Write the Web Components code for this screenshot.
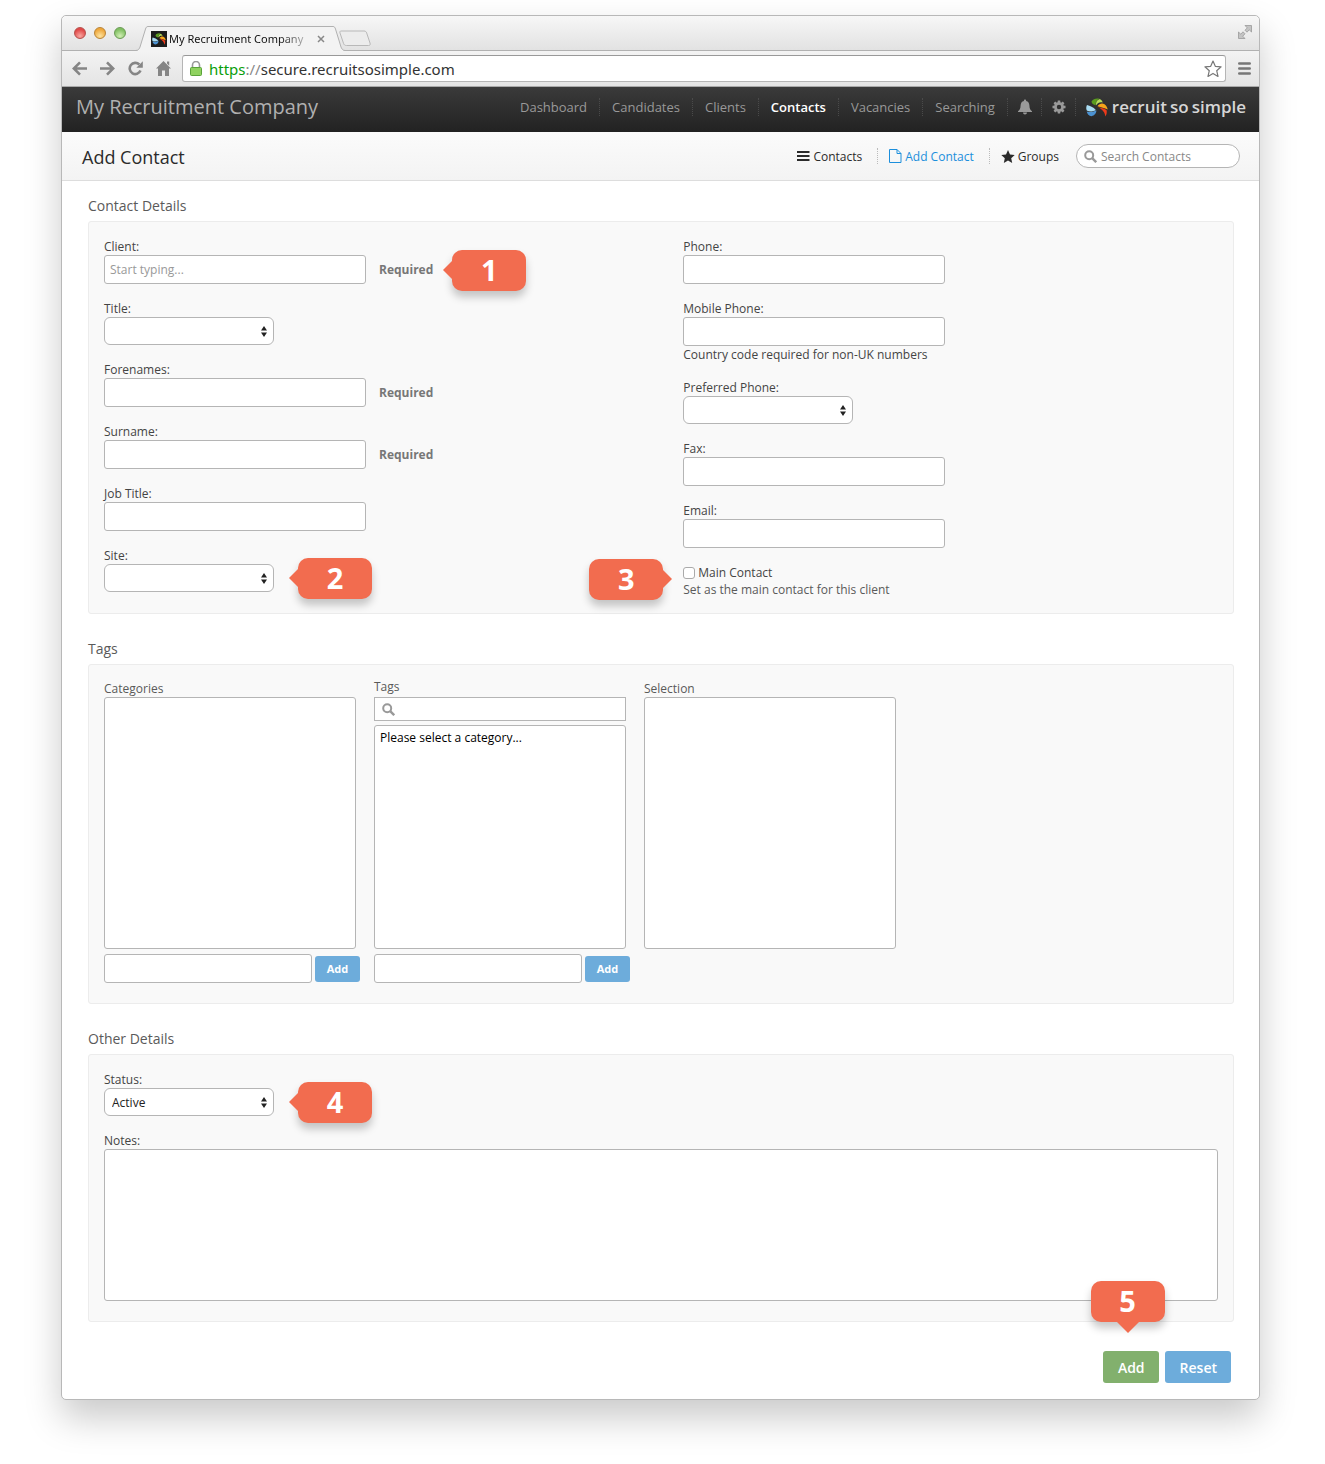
<!DOCTYPE html>
<html lang="en">
<head>
<meta charset="utf-8">
<title>Add Contact</title>
<style>
  body {
    margin: 0;
    padding: 15px 65px 64px 61px;
    background: #fff;
    color: #444;
    font: 12px/17px "Open Sans", "Noto Sans", sans-serif;
  }
</style>
</head>
<body>
<browser-window tab-title="My Recruitment Company" host="secure.recruitsosimple.com">
  <app-header brand="My Recruitment Company">
    <nav-link>Dashboard</nav-link>
    <nav-link>Candidates</nav-link>
    <nav-link>Clients</nav-link>
    <nav-link current>Contacts</nav-link>
    <nav-link>Vacancies</nav-link>
    <nav-link>Searching</nav-link>
    <nav-link label="Notifications"><app-icon name="bell"></app-icon></nav-link>
    <nav-link label="Settings"><app-icon name="gear"></app-icon></nav-link>
  </app-header>
  <page-bar heading="Add Contact">
    <page-link icon="list">Contacts</page-link>
    <page-link icon="file" current>Add Contact</page-link>
    <page-link icon="star">Groups</page-link>
  </page-bar>
  <contact-form>
    <form-section heading="Contact Details">
      <two-columns>
        <form-field slot="left" label="Client:" placeholder="Start typing..." required><call-out slot="callout" point="left">1</call-out></form-field>
        <form-field slot="left" label="Title:" kind="select"></form-field>
        <form-field slot="left" label="Forenames:" required></form-field>
        <form-field slot="left" label="Surname:" required></form-field>
        <form-field slot="left" label="Job Title:"></form-field>
        <form-field slot="left" label="Site:" kind="select"><call-out slot="callout" point="left">2</call-out></form-field>
        <form-field slot="right" label="Phone:"></form-field>
        <form-field slot="right" label="Mobile Phone:" hint="Country code required for non-UK numbers"></form-field>
        <form-field slot="right" label="Preferred Phone:" kind="select"></form-field>
        <form-field slot="right" label="Fax:"></form-field>
        <form-field slot="right" label="Email:"></form-field>
        <check-field slot="right" label="Main Contact" hint="Set as the main contact for this client"><call-out slot="callout" point="right">3</call-out></check-field>
      </two-columns>
    </form-section>
    <form-section heading="Tags" roomy>
      <tag-picker>
        <tag-column label="Categories" addable></tag-column>
        <tag-column label="Tags" searchable addable>Please select a category...</tag-column>
        <tag-column label="Selection"></tag-column>
      </tag-picker>
    </form-section>
    <form-section heading="Other Details" roomy>
      <field-stack>
        <form-field label="Status:" kind="select" value="Active"><call-out slot="callout" point="left">4</call-out></form-field>
        <form-field label="Notes:" kind="textarea"></form-field>
      </field-stack>
    </form-section>
    <form-actions slot="actions"><call-out slot="callout" point="down">5</call-out></form-actions>
  </contact-form>
</browser-window>

<script>
const define = (name, render) => customElements.define(name, class extends HTMLElement {
  connectedCallback() {
    if (this.shadowRoot) return;
    const root = this.attachShadow({ mode: 'open' });
    root.innerHTML = '<style>*{box-sizing:border-box}input,select,textarea,button{font:inherit;margin:0}svg{display:block}</style>' + render(this);
  }
});
const attr = (el, name) => el.getAttribute(name) || '';

const icons = {
  bell: '<svg width="14" height="16" viewBox="0 0 14 16" fill="#999"><path d="M7 0.5c.7 0 1.1.5 1.1 1.1v.5C10.300 2.600 11.300 4.400 11.400 6.500c.1 3 .8 4.700 2.600 5.800v.7H0v-.7c1.800-1.100 2.500-2.800 2.600-5.800C2.700 4.400 3.700 2.600 5.900 2.100v-.5C5.900 1 6.300.5 7 .5zM5 13.500h4c0 1.200-.9 2-2 2s-2-.8-2-2z"/></svg>',
  gear: '<svg width="14" height="14" viewBox="0 0 14 14"><g fill="#999"><path d="M5.800.5h2.400l.4 3H5.400z"/><path d="M5.800.5h2.400l.4 3H5.400z" transform="rotate(45 7 7)"/><path d="M5.800.5h2.400l.4 3H5.400z" transform="rotate(90 7 7)"/><path d="M5.800.5h2.400l.4 3H5.400z" transform="rotate(135 7 7)"/><path d="M5.800.5h2.400l.4 3H5.400z" transform="rotate(180 7 7)"/><path d="M5.800.5h2.400l.4 3H5.400z" transform="rotate(225 7 7)"/><path d="M5.800.5h2.400l.4 3H5.400z" transform="rotate(270 7 7)"/><path d="M5.800.5h2.400l.4 3H5.400z" transform="rotate(315 7 7)"/></g><circle cx="7" cy="7" r="3.500" fill="none" stroke="#999" stroke-width="2.600"/></svg>',
  list: '<svg width="13" height="12" viewBox="0 0 13 12" fill="#2b2b2b"><path d="M0 1h12.500v2H0zM0 5h12.500v2H0zM0 9h12.500v2H0z"/></svg>',
  file: '<svg width="13" height="14" viewBox="0 0 13 14" fill="none" stroke="#1c8fdc"><path d="M.5.5h7.500l4 4v9H.5zM8 .5v4h4"/></svg>',
  star: '<svg width="14" height="13" viewBox="0 0 14 13" fill="#2b2b2b"><path d="M7 0l2 4.400 4.700.5-3.500 3.300 1 4.800L7 10.600 2.800 13l1-4.800L.3 4.900 5 4.400z"/></svg>',
  search: '<svg width="13" height="13" viewBox="0 0 13 13" fill="none" stroke="#999"><circle cx="5.200" cy="5.200" r="4" stroke-width="2"/><path d="M8.200 8.200l4 4" stroke-width="2.400"/></svg>',
  pinwheel: '<svg width="22" height="19" viewBox="0 0 22 19"><path d="M5.500 3.500C7 .8 10.500-.2 13.500.8 10.500 2 9.500 4.500 9.800 7.200 7.500 7 5.700 5.600 5.500 3.500z" fill="#5a9c1e"/><path d="M10.200 7.300c-.7-3 1-5.500 3.600-6.300 1.600.8 2.600 2 2.900 3.500-3-.7-5 .3-6.500 2.800z" fill="#b5dc5a"/><path d="M11.500 8.200c1.800-2.600 4.600-3.300 7-2 1.600 1 2.900 2.900 3.200 5.400-2.800-1.700-6.900-2.400-10.200-3.400z" fill="#f8a51b"/><path d="M12 9.200c3 .7 6.500 1 8.600 3.100.5 2 .1 4.300-1.300 6.200-.2-4.200-2.900-7.100-7.300-9.300z" fill="#ee3a1a"/><path d="M1 7c3 .8 6.300 2 8.800 5C7 13.800 3.200 14 .8 12.500 0 10.800.1 8.700 1 7z" fill="#a9dcf3"/><path d="M.7 13.400C4 14.700 7.500 14 10.300 12.300c.3 2.900-1.800 5.400-4.800 5.900C3 17.800 1.200 16 .7 13.400z" fill="#4b92d2"/></svg>',
  sort: '<svg width="6" height="11" viewBox="0 0 6 11" fill="#222"><path d="M3 0l3 4.500H0zM3 11L0 6.500h6z"/></svg>'
};
icons.favicon = icons.pinwheel.replace('width="22" height="19"', 'width="14" height="12"');

define('app-icon', el => `<style>:host{display:block}</style>${icons[attr(el, 'name')]}`);

define('browser-window', el => `
  <style>
    :host { display: block; border: 1px solid #b8b8b8; border-radius: 5px; background: #fff; box-shadow: 0 18px 36px rgba(0,0,0,.21); }
    .strip { display: flex; align-items: flex-end; height: 35px; padding: 0 7px 0 12px; border-bottom: 1px solid #b1b1b1; border-radius: 5px 5px 0 0; background: linear-gradient(#f7f7f7, #e2e2e2); }
    .lights { display: flex; gap: 8px; align-self: center; }
    .lights i { width: 12px; height: 12px; border-radius: 50%; border: 1px solid; }
    .r { background: radial-gradient(circle at 50% 80%, #f9a8a2, #e04848 70%); border-color: #b5504c !important; }
    .y { background: radial-gradient(circle at 50% 80%, #fde3a0, #eea73c 70%); border-color: #b98336 !important; }
    .g { background: radial-gradient(circle at 50% 80%, #d2efb5, #80bf62 70%); border-color: #6a9a54 !important; }
    .tab { display: flex; margin: 0 0 -1px 10px; }
    .mid { display: flex; align-items: center; width: 185px; height: 25px; padding-left: 3px; border-top: 1px solid #b1b1b1; background: #f3f3f3; color: #111; font: 11px/16px "Noto Sans", sans-serif; white-space: nowrap; }
    .fav { display: grid; place-items: center; width: 16px; height: 16px; margin-right: 2px; background: #1d1d1d; }
    .name { width: 148px; overflow: hidden; mask-image: linear-gradient(90deg, #000 110px, transparent 146px); }
    .new { margin: 0 0 3px -7px; }
    .full { margin: 0 0 11px auto; }
    .bar { display: flex; align-items: center; height: 36px; padding: 0 8px 0 10px; border-bottom: 1px solid #a9a9a9; background: linear-gradient(#f3f3f3, #e4e4e4); }
    .tools { display: flex; gap: 13px; }
    .omni { display: flex; align-items: center; flex: 1; height: 27px; margin: 0 12px 0 11px; padding: 0 3px 0 7px; border: 1px solid #b5b5b5; border-top-color: #999; border-radius: 3px; background: #fff; color: #333; font: 15px/20px "Noto Sans", sans-serif; }
    .url { flex: 1; margin-left: 7px; }
    .url b { color: #0a9e0a; font-weight: 400; }
    .url i { color: #888; font-style: normal; }
    svg { flex: none; }
  </style>
  <div class="strip">
    <div class="lights"><i class="r"></i><i class="y"></i><i class="g"></i></div>
    <div class="tab">
      <svg width="12" height="25" viewBox="0 0 12 25"><path d="M0 25C3 24 3.500 22.500 4 21L9.500 3C10 1.500 10.500.5 12 .5V25z" fill="#f3f3f3"/><path d="M0 24.500C2.500 24.300 3.500 22.500 4 21L9.500 3C10 1.500 10.500.5 12 .5" fill="none" stroke="#b1b1b1"/></svg>
      <div class="mid"><span class="fav"><app-icon name="favicon"></app-icon></span><span class="name">${attr(el, 'tab-title')}</span>
        <svg width="8" height="8" viewBox="0 0 8 8" stroke="#888" stroke-width="1.500"><path d="M1 1l6 6M7 1L1 7"/></svg></div>
      <svg width="12" height="25" viewBox="0 0 12 25"><path d="M12 25C9 24 8.500 22.500 8 21L2.500 3C2 1.500 1.500.5 0 .5V25z" fill="#f3f3f3"/><path d="M12 24.500C9.500 24.300 8.500 22.500 8 21L2.500 3C2 1.500 1.500.5 0 .5" fill="none" stroke="#b1b1b1"/></svg>
    </div>
    <svg class="new" width="34" height="17" viewBox="0 0 34 17"><path d="M3 1h23c1.500 0 2.200.6 2.700 2l3.300 10c.6 1.800 0 2.500-1.500 2.500H8.500c-1.600 0-2.500-.6-3-2.200L2 3c-.4-1.200 0-2 1-2z" fill="#ececec" stroke="#b8b8b8"/></svg>
    <svg class="full" width="14" height="14" viewBox="0 0 14 14" fill="#c4c4c4" stroke="#999" stroke-width=".8"><path d="M7 .5h6.500V7l-2.300-2.200-2.200 2.400-2-2 2.300-2.300zM7 13.500H.5V7l2.300 2.200L5 6.800l2 2-2.300 2.400z"/></svg>
  </div>
  <div class="bar">
    <div class="tools">
      <svg width="15" height="15" viewBox="0 0 15 15" fill="none" stroke="#858585" stroke-width="2.600"><path d="M15 7.500H2M8 1.300L1.800 7.500 8 13.700"/></svg>
      <svg width="15" height="15" viewBox="0 0 15 15" fill="none" stroke="#858585" stroke-width="2.600"><path d="M0 7.500h13M7 1.300l6.200 6.200L7 13.700"/></svg>
      <svg width="15" height="15" viewBox="0 0 15 15"><path d="M12.500 9.600A5.600 5.600 0 1 1 11.300 3.500" fill="none" stroke="#858585" stroke-width="2.600"/><path d="M14.800.3v6.500H8.300z" fill="#858585"/></svg>
      <svg width="15" height="15" viewBox="0 0 15 15" fill="#858585"><path d="M7.500 0L15 7.600h-2V15H9V9.500H6V15H2V7.600H0zM11 .5h2.200v4.200L11 2.600z"/></svg>
    </div>
    <div class="omni">
      <svg width="12" height="15" viewBox="0 0 12 15"><path d="M2.500 7V4a3.500 3.500 0 0 1 7 0v3" fill="none" stroke="#999" stroke-width="1.600"/><rect x=".5" y="6.500" width="11" height="8" rx="1" fill="#8fd25f" stroke="#5ba33a"/></svg>
      <span class="url"><b>https</b><i>://</i>${attr(el, 'host')}</span>
      <svg width="18" height="18" viewBox="0 0 18 18" fill="#fff" stroke="#777" stroke-width="1.200" stroke-linejoin="round"><path d="M9 1l2.300 5.300 5.800.5-4.400 3.900 1.300 5.700L9 13.400l-5 3 1.300-5.700L.9 6.800l5.800-.5z"/></svg>
    </div>
    <svg width="13" height="13" viewBox="0 0 13 13" stroke="#777" stroke-width="2.600" stroke-linecap="round"><path d="M1.300 1.500h10.400M1.300 6.500h10.400M1.300 11.500h10.400"/></svg>
  </div>
  <slot></slot>`);

define('app-header', el => `
  <style>
    :host { display: flex; align-items: center; justify-content: space-between; height: 45px; padding: 0 13px 5px 14px; box-sizing: border-box; background: linear-gradient(#3a3a3a, #222); color: #b0b0b0; }
    .brand { font-size: 20px; line-height: 28px; }
    nav { display: flex; align-items: center; }
    .logo { display: flex; align-items: center; gap: 4px; margin-left: 10px; color: #d6d6d6; font-size: 17px; line-height: 24px; font-weight: 600; text-decoration: none; white-space: nowrap; }
    .words { display: flex; gap: 3px; }
  </style>
  <div class="brand">${attr(el, 'brand')}</div>
  <nav><slot></slot><a class="logo" href="#"><app-icon name="pinwheel"></app-icon><span class="words"><span>recruit</span><span>so</span><span>simple</span></span></a></nav>`);

define('nav-link', el => `
  <style>
    :host { display: block; padding: 0 12px; border-right: 1px dotted #4a4a4a; font-size: 13px; line-height: 18px; }
    :host([label]) { padding: 0 9px 0 10px; }
    a { display: flex; align-items: center; height: 18px; color: #999; text-decoration: none; }
    :host([current]) a { color: #fff; font-weight: 600; }
  </style>
  <a href="#" ${el.hasAttribute('label') ? `aria-label="${attr(el, 'label')}"` : ''}><slot></slot></a>`);

define('page-bar', el => `
  <style>
    :host { display: flex; align-items: center; justify-content: space-between; height: 49px; box-sizing: border-box; padding: 0 19px 0 20px; border-bottom: 1px solid #ddd; background: linear-gradient(#fbfbfb, #f3f3f3); }
    h1 { margin: 2px 0 0; color: #2b2b2b; font-size: 18px; line-height: 26px; font-weight: 400; }
    nav { display: flex; align-items: center; }
    label { display: flex; align-items: center; gap: 4px; width: 164px; height: 24px; margin-left: 6px; padding: 0 7px; border: 1px solid #b5b5b5; border-radius: 12px; background: #fff; }
    input { flex: 1; min-width: 0; padding: 0; border: 0; outline: 0; background: none; }
    input::placeholder { color: #888; }
  </style>
  <h1>${attr(el, 'heading')}</h1>
  <nav><slot></slot><label><app-icon name="search"></app-icon><input type="text" aria-label="Search Contacts" placeholder="Search Contacts"></label></nav>`);

define('page-link', el => `
  <style>
    :host { display: block; padding: 0 15px 0 11px; border-right: 1px dotted #bbb; }
    :host(:last-of-type) { border-right: 0; padding-right: 11px; }
    a { display: flex; align-items: center; gap: 3px; height: 16px; color: #2b2b2b; text-decoration: none; }
    :host([current]) a { color: #1c8fdc; }
  </style>
  <a href="#"><app-icon name="${attr(el, 'icon')}"></app-icon><slot></slot></a>`);

define('contact-form', () => `
  <style>
    :host { display: block; padding: 15px 25px 16px 26px; }
    form { display: flex; flex-direction: column; gap: 25px; }
    .actions { margin: 4px 3px 0 0; }
  </style>
  <form><slot></slot><div class="actions"><slot name="actions"></slot></div></form>`);

define('form-section', el => `
  <style>
    :host { display: block; }
    h2 { margin: 0 0 5px; color: #5a5a5a; font-size: 14px; line-height: 20px; font-weight: 400; }
    .panel { padding: 16px 15px 15px; border: 1px solid #ececec; border-radius: 3px; background: #f9f9f9; }
    :host([roomy]) .panel { padding-bottom: 20px; }
  </style>
  <h2>${attr(el, 'heading')}</h2><div class="panel"><slot></slot></div>`);

define('two-columns', () => `
  <style>
    :host { display: grid; grid-template-columns: 52fr 48fr; align-items: start; }
    div { display: flex; flex-direction: column; gap: 16px; min-width: 0; }
  </style>
  <div><slot name="left"></slot></div><div><slot name="right"></slot></div>`);

define('field-stack', () => `<style>:host{display:flex;flex-direction:column;gap:16px}</style><slot></slot>`);

define('form-field', el => {
  const kind = attr(el, 'kind');
  const control = kind === 'select'
    ? `<span class="pick"><select id="c"><option>${attr(el, 'value')}</option></select><app-icon name="sort"></app-icon></span>`
    : kind === 'textarea' ? '<textarea id="c"></textarea>'
    : `<input id="c" type="text" placeholder="${attr(el, 'placeholder')}">`;
  return `
  <style>
    :host { display: block; }
    label { display: block; }
    .row { position: relative; display: flex; align-items: center; width: fit-content; }
    :host([kind=textarea]) .row { width: auto; }
    input { width: 262px; height: 29px; padding: 0 5px; }
    input, textarea { display: block; border: 1px solid #b5b5b5; border-radius: 3px; background: #fff; outline: 0; }
    input::placeholder { color: #999; }
    textarea { width: 100%; height: 152px; resize: none; }
    .pick { display: grid; align-items: center; width: 170px; }
    .pick > * { grid-area: 1 / 1; }
    select { width: 100%; height: 28px; padding: 0 7px; appearance: none; border: 1px solid #b5b5b5; border-radius: 6px; background: #fff; color: #222; }
    .pick app-icon { justify-self: end; margin-right: 7px; pointer-events: none; }
    b { margin-left: 13px; color: #777; font-weight: 700; }
    .note { position: absolute; left: 100%; top: 50%; padding-left: 24px; }
    :host([required]) .note { padding-left: 19px; }
  </style>
  <label for="c">${attr(el, 'label')}</label>
  <div class="row">${control}${el.hasAttribute('required') ? '<b>Required</b>' : ''}<div class="note"><slot name="callout"></slot></div></div>
  ${el.hasAttribute('hint') ? `<div>${attr(el, 'hint')}</div>` : ''}`;
});

define('check-field', el => `
  <style>
    :host { display: block; position: relative; }
    label { display: flex; align-items: center; gap: 3px; }
    input { appearance: none; width: 12px; height: 12px; border: 1px solid #aaa; border-radius: 3px; background: #fff; }
    .hint { color: #5a5a5a; }
    .note { position: absolute; right: 100%; top: 15px; padding-right: 20px; }
  </style>
  <label><input type="checkbox">${attr(el, 'label')}</label>
  <div class="hint">${attr(el, 'hint')}</div>
  <div class="note"><slot name="callout"></slot></div>`);

define('call-out', () => `
  <style>
    :host { display: block; position: relative; width: 74px; height: 41px; margin-top: -20px; border-radius: 10px; background: #f26c4f; box-shadow: 0 6px 9px rgba(0,0,0,.22); color: #fff; font-size: 29px; line-height: 40px; font-weight: 700; text-align: center; }
    i { position: absolute; border: 9px solid transparent; }
    :host([point=left]) i { right: 100%; top: 11px; border-left: 0; border-right-color: #f26c4f; }
    :host([point=right]) i { left: 100%; top: 11px; border-right: 0; border-left-color: #f26c4f; }
    :host([point=down]) i { left: 26px; top: 100%; border-width: 11px; border-bottom: 0; border-top-color: #f26c4f; }
  </style>
  <slot></slot><i></i>`);

define('tag-picker', () => `<style>:host{display:flex;gap:14px}</style><slot></slot>`);

define('tag-column', el => `
  <style>
    :host { display: block; width: 256px; color: #5a5a5a; }
    .label { line-height: 16px; }
    :host([searchable]) .label { padding-bottom: 4px; line-height: 12px; }
    .boxes { display: flex; flex-direction: column; gap: 4px; width: 252px; height: 252px; }
    .search { display: flex; align-items: center; gap: 4px; height: 24px; padding: 0 7px; border: 1px solid #b5b5b5; background: #fff; }
    .search input { flex: 1; min-width: 0; padding: 0; border: 0; outline: 0; }
    .list { flex: 1; padding: 3px 5px; border: 1px solid #b5b5b5; border-radius: 3px; background: #fff; color: #000; }
    .add { display: flex; align-items: center; gap: 3px; margin-top: 5px; }
    .add input { width: 208px; height: 29px; border: 1px solid #b5b5b5; border-radius: 3px; background: #fff; outline: 0; }
    button { width: 45px; height: 26px; padding: 0; border: 0; border-radius: 3px; background: #6dacdb; color: #fff; font-size: 11px; font-weight: 700; }
  </style>
  <div class="label" id="l">${attr(el, 'label')}</div>
  <div class="boxes">
    ${el.hasAttribute('searchable') ? '<label class="search"><app-icon name="search"></app-icon><input type="text" aria-label="Search tags"></label>' : ''}
    <div class="list" role="listbox" aria-labelledby="l"><slot></slot></div>
  </div>
  ${el.hasAttribute('addable') ? '<div class="add"><input type="text" aria-labelledby="l"><button type="button">Add</button></div>' : ''}`);

define('form-actions', () => `
  <style>
    :host { display: flex; justify-content: flex-end; gap: 6px; }
    span { position: relative; }
    button { display: block; height: 32px; padding: 0 14px 0 15px; border: 0; border-radius: 3px; background: #6dacdb; color: #fff; font-size: 14px; font-weight: 600; }
    .go { background: #82b06d; }
    .note { position: absolute; bottom: 100%; right: -6px; padding-bottom: 29px; }
  </style>
  <span><button class="go" type="submit">Add</button><div class="note"><slot name="callout"></slot></div></span>
  <button type="reset">Reset</button>`);
</script>
</body>
</html>
